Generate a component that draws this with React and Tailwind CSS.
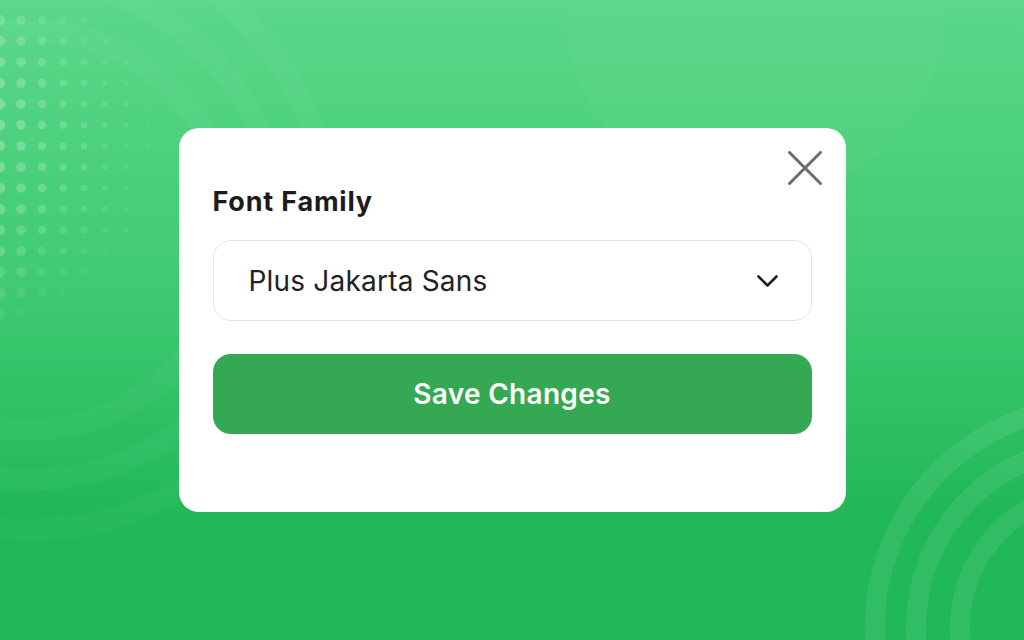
const font = { fontFamily: 'Inter, "Noto Sans", sans-serif' };

function Dots() {
  const dots = [];
  for (let r = 0; r < 15; r++) {
    for (let c = 0; c < 8; c++) {
      const x = c * 21;
      const y = 20 + r * 21;
      const dx = x / 160;
      const dy = Math.abs(y - 140) / 220;
      const fade = Math.max(0, 1 - dx * 0.8 - dy * dy * 1.2);
      if (fade <= 0.05) continue;
      dots.push(
        <circle key={`${r}-${c}`} cx={x} cy={y} r={1.5 + 3.8 * (1 - dx)} fill="white" fillOpacity={0.26 * fade} />
      );
    }
  }
  return dots;
}

function Backdrop() {
  return (
    <svg className="absolute inset-0" width="1024" height="640" viewBox="0 0 1024 640">
      <g fill="none" stroke="white" strokeOpacity="0.03" strokeWidth="22">
        <circle cx="30" cy="230" r="200" />
        <circle cx="30" cy="230" r="250" />
        <circle cx="30" cy="230" r="300" />
      </g>
      <circle cx="755" cy="10" r="190" fill="white" fillOpacity="0.025" />
      <g fill="none" stroke="white" strokeOpacity="0.08" strokeWidth="20">
        <circle cx="1096" cy="627" r="221" />
        <circle cx="1096" cy="627" r="180" />
        <circle cx="1096" cy="627" r="136" />
      </g>
      <Dots />
    </svg>
  );
}

export default function App() {
  return (
    <div
      className="relative w-[1024px] h-[640px] overflow-hidden bg-[linear-gradient(180deg,#5bd88a_0%,#3fca71_45%,#21b858_80%,#20b857_100%)]"
      style={font}
    >
      <Backdrop />
      <div className="relative flex justify-center pt-[128px]">
        <div className="relative w-[667px] bg-white rounded-[20px] px-[34px] pt-[56px] pb-[78px]">
          <button className="absolute top-[23px] right-[24px] text-[#6d6d6d]" aria-label="Close">
            <svg width="34" height="34" viewBox="0 0 34 34" fill="none" stroke="currentColor" strokeWidth="3" strokeLinecap="round">
              <path d="M1.5 1.5 32.5 32.5M32.5 1.5 1.5 32.5" />
            </svg>
          </button>
          <h2 className="text-[27px] leading-[36px] font-bold text-[#1c1c1e] tracking-[0.8px]">Font Family</h2>
          <div className="mt-[20px] h-[81px] border border-[#e4e4e4] rounded-[18px] flex items-center justify-between pl-[35px] pr-[33px]">
            <span className="text-[28px] text-[#222226] tracking-[0.2px]">Plus Jakarta Sans</span>
            <svg width="21" height="12" viewBox="0 0 21 12" fill="none" stroke="#1e1e1e" strokeWidth="2.6" strokeLinecap="round" strokeLinejoin="round">
              <path d="M1.5 1.5 10.5 10.5 19.5 1.5" />
            </svg>
          </div>
          <button className="mt-[33px] w-full h-[80px] rounded-[18px] bg-[#34a853] text-white text-[28px] font-semibold tracking-[0.3px]">
            Save Changes
          </button>
        </div>
      </div>
    </div>
  );
}
